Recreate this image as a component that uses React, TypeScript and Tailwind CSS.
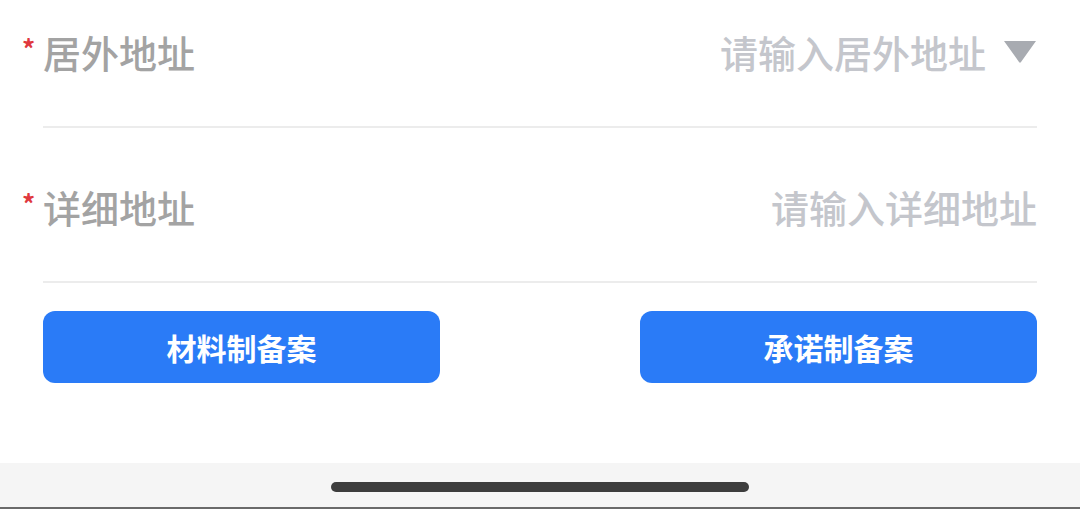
const font = { fontFamily: '"Noto Sans CJK SC", "Noto Sans", sans-serif' };

function Field({ label, placeholder, select }: { label: string; placeholder: string; select?: boolean }) {
  return (
    <div className="mx-[43px] flex h-[155px] items-center justify-between border-b-2 border-[#ececec] pt-[5px]">
      <div className="relative flex items-center">
        <span className="absolute left-[-21px] top-[2px] text-[26px] font-bold leading-none text-[#e0383e]">*</span>
        <span className="text-[38px] font-medium leading-none text-[#a3a3a3]">{label}</span>
      </div>
      <div className="flex items-center">
        <span className="text-[38px] font-medium leading-none text-[#c4c6cc]">{placeholder}</span>
        {select && (
          <svg width="34" height="24" viewBox="0 0 34 24" className="ml-[17px]">
            <path d="M1 1 H33 L18 22 Q17 23.5 16 22 Z" fill="#a8abb1" />
          </svg>
        )}
      </div>
    </div>
  );
}

export default function App() {
  return (
    <div className="flex h-[509px] w-[1080px] flex-col bg-white" style={font}>
      <div className="-mt-[27px]">
        <Field label="居外地址" placeholder="请输入居外地址" select />
        <Field label="详细地址" placeholder="请输入详细地址" />
      </div>
      <div className="mx-[43px] mt-[28px] flex justify-between">
        <button className="h-[72px] w-[397px] rounded-[12px] bg-[#2a7bf7] text-[30px] font-bold text-white">
          材料制备案
        </button>
        <button className="h-[72px] w-[397px] rounded-[12px] bg-[#2a7bf7] text-[30px] font-bold text-white">
          承诺制备案
        </button>
      </div>
      <div className="flex-1" />
      <div className="flex h-[46px] items-start justify-center border-b-2 border-[#6a6a6a] bg-[#f5f5f5] pt-[19px]">
        <div className="h-[10px] w-[418px] rounded-full bg-[#3d3d3d]" />
      </div>
    </div>
  );
}
